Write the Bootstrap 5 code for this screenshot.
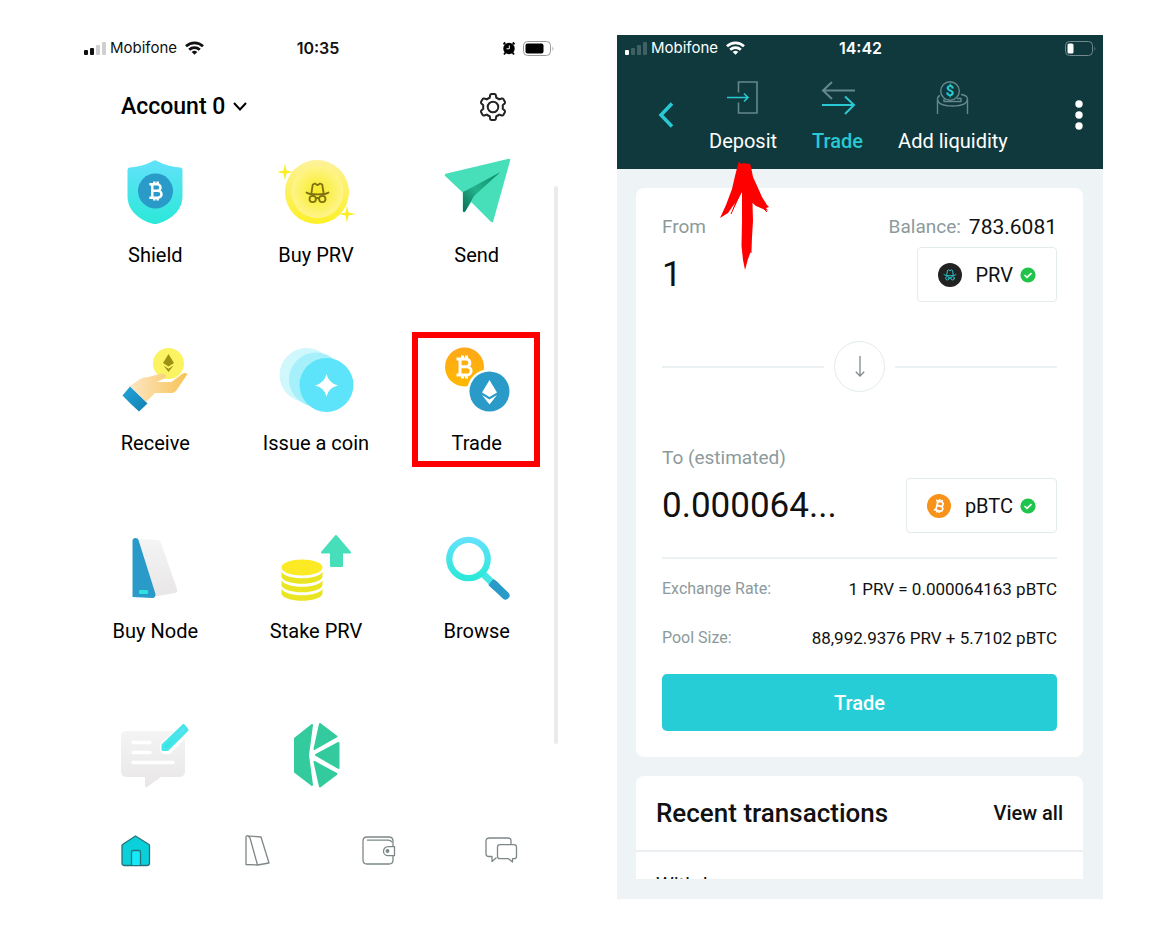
<!DOCTYPE html>
<html lang="en">
<head>
<meta charset="utf-8">
<meta name="viewport" content="width=device-width, initial-scale=1">
<title>Wallet and trade</title>
<link href="https://cdn.jsdelivr.net/npm/bootstrap@5.3.0/dist/css/bootstrap.min.css" rel="stylesheet">
<style>
  body { font-family: Roboto, "Liberation Sans", sans-serif; font-size: 20px; line-height: 26px; color: #111; background: #fff; }
  svg { display: block; overflow: visible; flex: none; }
  a { color: inherit; text-decoration: none; }
  .screens { gap: 57px; padding: 35px 51px 40px 74px; }
  .phone { flex: 1 1 0; min-width: 0; }

  .status { display: grid; grid-template-columns: 1fr auto 1fr; align-items: center; height: 26px; padding: 0 8px 0 10px; font: 15px/26px Inter, sans-serif; color: #111; }
  .status strong { font-size: 16px; font-weight: 600; }
  .home-head { height: 30px; margin: 31px 54px 28px 47px; }
  .account { font-size: 23px; font-weight: 500; line-height: 30px; color: #000; }
  .tiles { display: grid; grid-template-columns: repeat(3, 1fr); grid-template-rows: repeat(3, 188px) 74px; padding: 0 3px 0 1px; }
  .tile { display: flex; flex-direction: column; align-items: center; gap: 16px; padding-top: 10px; line-height: 30px; color: #000; }
  .picked { position: relative; }
  .picked::after { content: ""; position: absolute; top: -6px; left: 50%; width: 128px; height: 135px; margin-left: -65px; border: 6px solid #f00; }
  .thumb { position: absolute; right: 2px; top: 36px; bottom: 44px; width: 4px; background: #ebebeb; border-radius: 2px; }
  .tabs { display: grid; grid-template-columns: repeat(4, 1fr); margin: 46px -2px 0 0; justify-items: center; }

  .trade-screen { background: #eef4f5; }
  .top { background: #0f393d; color: #fff; }
  .top .status { color: #fff; padding: 0 7px 0 8px; }
  .top-nav { padding: 19px 20px 15px 42px; gap: 36px; }
  .modes { display: flex; gap: 35px; }
  .mode { display: flex; flex-direction: column; align-items: center; gap: 14px; position: relative; }
  .mode.on { color: #29c9d3; font-weight: 500; }
  .pointer { position: absolute; top: 81px; left: 50%; margin-left: -23px; z-index: 2; }
  .panels { padding: 19px 20px 20px 19px; display: grid; gap: 19px; }
  .panel { background: #fff; border-radius: 8px; overflow: hidden; }
  .pair { padding: 26px; }
  .muted { color: #8c9a9c; }
  .caption { font-size: 19px; }
  .balance { display: flex; gap: 8px; font-size: 21px; }
  .amount { border: 0; padding: 0; background: none; outline: 0; color: #111; font-size: 35px; line-height: 55px; height: 55px; flex: 1; min-width: 0; text-overflow: ellipsis; }
  .line { display: flex; align-items: center; margin-top: 7px; }
  .token { height: 55px; padding: 0 20px; background: #fff; border: 1px solid #e3ebed; border-radius: 4px; display: flex; align-items: center; gap: 7px; color: #111; }
  .token span { margin-left: 7px; }
  .swap { display: flex; align-items: center; gap: 10px; margin: 39px 0 53px; }
  .swap i { flex: 1; height: 2px; background: #ebf1f2; }
  .swap button { width: 51px; height: 51px; border: 1px solid #e3ebec; border-radius: 50%; background: #fff; padding: 0; display: grid; place-items: center; }
  .facts { display: grid; gap: 23px; margin: 24px 0 23px; padding-top: 17px; border-top: 2px solid #ebf1f2; font-size: 16px; }
  .facts div { display: flex; justify-content: space-between; }
  .facts dt { font-weight: 400; }
  .facts dd { margin: 0; font-size: 17px; }
  .go { height: 57px; border: 0; border-radius: 5px; background: #26cdd6; color: #fff; font-weight: 500; }
  .go:hover { background: #20bcc5; color: #fff; }
  .recent-head { padding: 24px 20px; border-bottom: 2px solid #ebeff1; }
  .recent-head h2 { font-size: 26px; line-height: 26px; font-weight: 500; margin: 0; }
  .recent { margin: 0; padding: 20px 20px 0; max-height: 27px; overflow: hidden; list-style: none; }
  .recent-panel { border-radius: 8px 8px 0 0; }
</style>
</head>
<body>
<svg width="0" height="0" class="position-absolute" aria-hidden="true">
  <defs>
    <linearGradient id="aqua" x1="0" y1="0" x2="0" y2="1"><stop stop-color="#62e2fb"/><stop offset="1" stop-color="#2be8d8"/></linearGradient>
    <linearGradient id="gold" x1="0" y1="0" x2="0" y2="1"><stop stop-color="#fdf29a"/><stop offset="1" stop-color="#fdf026"/></linearGradient>
    <radialGradient id="glow"><stop stop-color="#f8ea24"/><stop offset=".55" stop-color="#fbf15a"/><stop offset="1" stop-color="#fff48a"/></radialGradient>
    <linearGradient id="fold" x1="1" y1="0" x2="0" y2="1"><stop stop-color="#0b8a68"/><stop offset=".55" stop-color="#22b38c"/><stop offset="1" stop-color="#0b6b54"/></linearGradient>
    <linearGradient id="skin" x1="0" y1="0" x2="1" y2="0"><stop stop-color="#fde6c4"/><stop offset="1" stop-color="#f8c355"/></linearGradient>
    <linearGradient id="cuff" x1="0" y1="0" x2="1" y2="1"><stop stop-color="#22a5dc"/><stop offset="1" stop-color="#147fae"/></linearGradient>
    <linearGradient id="pale" x1="0" y1="0" x2="0" y2="1"><stop stop-color="#f5f4f4"/><stop offset="1" stop-color="#e8e6e7"/></linearGradient>
    <linearGradient id="orange" x1="0" y1="0" x2="0" y2="1"><stop stop-color="#ffa81a"/><stop offset="1" stop-color="#ffb800"/></linearGradient>
    <symbol id="coin-b" viewBox="0 0 20 24" overflow="visible"><path d="M2 4H11.500a3.900 3.900 0 0 1 0 7.800H6M2 20H12.500a4.100 4.100 0 0 0 0-8.200H6M5.500 4V20M8 .5V4M12 .5V4M8 20v3.500M12 20v3.500" fill="none" stroke="currentColor" stroke-width="3"/></symbol>
    <symbol id="hat" viewBox="0 0 24 22" overflow="visible"><g fill="none" stroke="currentColor" stroke-width="1.800" stroke-linejoin="round" stroke-linecap="round"><path d="M6 10.500 7.300 2.500 9.500 1.500 12 3.200 14.500 1.500 16.700 2.500 18 10.500M1 10.500c3 2.600 19 2.600 22 0M10.500 16.500q1.500-1 3 0"/><circle cx="7.200" cy="17" r="3.200"/><circle cx="16.800" cy="17" r="3.200"/></g></symbol>
    <symbol id="wifi" viewBox="0 0 19 14" overflow="visible"><g fill="none" stroke="currentColor" stroke-width="2.700"><path d="M1 5.300a12.200 12.200 0 0 1 17 0"/><path d="M4.200 8.700a7.700 7.700 0 0 1 10.600 0"/></g><path d="M6.700 11a4.200 4.200 0 0 1 5.600 0L9.500 13.800z" fill="currentColor"/></symbol>
    <symbol id="ok" viewBox="0 0 16 16"><circle cx="8" cy="8" r="7.600" fill="#21c44b"/><path d="m4.500 8 2.500 2.400 4.500-4.300" fill="none" stroke="#fff" stroke-width="1.600"/></symbol>
  </defs>
</svg>

<div class="screens d-flex">
  <main class="phone">
    <div class="status">
      <div class="d-flex align-items-center">
        <svg width="22" height="13" viewBox="0 0 22 13"><rect y="8" width="4" height="5" rx="1" fill="#111"/><rect x="6" y="6" width="4" height="7" rx="1" fill="#111"/><rect x="12" y="3" width="4" height="10" rx="1" fill="#cfcfcf"/><rect x="18" width="4" height="13" rx="1" fill="#cfcfcf"/></svg>
        <span class="ms-1 me-2">Mobifone</span>
        <svg width="19" height="14"><use href="#wifi"/></svg>
      </div>
      <strong>10:35</strong>
      <div class="d-flex align-items-center justify-content-end gap-2">
        <svg width="12" height="13" viewBox="0 0 12 13"><circle cx="6" cy="6.500" r="5.700"/><path d="m.5 2.300 1.800-1.800M11.500 2.300 9.700.5M2.500 10.500 1 12.500M9.500 10.500l1.500 2" stroke="#000" stroke-width="1.800"/><path d="M6.300 3.500v3.300H3.500" fill="none" stroke="#fff"/></svg>
        <svg width="29" height="15" viewBox="0 0 29 15"><rect x=".5" y=".5" width="27" height="14" rx="4" fill="none" stroke="#999"/><rect x="2.500" y="2.500" width="18" height="10" rx="2"/><path d="M29.500 5v5q1.500-2.500 0-5" fill="#999"/></svg>
      </div>
    </div>

    <header class="home-head d-flex justify-content-between align-items-center">
      <button class="account btn border-0 p-0 d-flex align-items-center gap-2">Account 0
        <svg width="14" height="10" viewBox="0 0 14 10"><path d="m1 1 6 6.500L13 1" fill="none" stroke="#000" stroke-width="2"/></svg>
      </button>
      <button class="btn border-0 p-0" aria-label="Settings">
        <svg width="26" height="28" viewBox="0 0 26 28" fill="none" stroke="#222" stroke-width="2" stroke-linejoin="round"><path d="M11.500 1H14.500Q15.600 1 15.800 2L16.300 4.800Q18 5.400 19.300 6.400L21.700 5.500Q22.800 5.200 23.300 6L24.900 8.800Q25.300 9.800 24.600 10.500L22.700 12.200Q23 14 22.700 15.800L24.600 17.500Q25.300 18.200 24.900 19.200L23.300 22Q22.800 22.800 21.700 22.500L19.300 21.600Q18 22.600 16.300 23.200L15.800 26Q15.600 27 14.500 27H11.500Q10.400 27 10.200 26L9.700 23.200Q8 22.600 6.700 21.600L4.300 22.500Q3.200 22.800 2.700 22L1.100 19.200Q.7 18.200 1.400 17.500L3.300 15.800Q3 14 3.300 12.200L1.400 10.500Q.7 9.800 1.100 8.800L2.700 6Q3.200 5.200 4.300 5.500L6.700 6.400Q8 5.400 9.700 4.800L10.200 2Q10.400 1 11.500 1z"/><circle cx="13" cy="14" r="5.300"/></svg>
      </button>
    </header>

    <div class="position-relative">
      <nav class="tiles" aria-label="Actions">
        <a class="tile" href="#shield">
          <svg width="80" height="64" viewBox="0 0 80 64"><path d="M38.500.8q1.500-1 3 0C49 5 57 7 65 7.500q2.500.2 2.500 3V36C67.500 54 51 61 43 63.600q-3 1-6 0C29 61 12.500 54 12.500 36V10.500q0-2.800 2.500-3C23 7 31 5 38.500.8z" fill="url(#aqua)"/><circle cx="40.500" cy="31" r="17.500" fill="#2a9bc9"/><use href="#coin-b" x="32.500" y="21" width="17" height="20" color="#fff"/></svg>
          Shield
        </a>
        <a class="tile" href="#buy-prv">
          <svg width="80" height="64" viewBox="0 0 80 64"><circle cx="41" cy="32" r="32" fill="url(#gold)"/><circle cx="41.500" cy="32" r="26" fill="url(#glow)"/><use href="#hat" x="29.500" y="22" width="24" height="22" color="#7d7110"/><g fill="#fdee22"><path d="M9 3.500 10.500 10.500 17 12 10.500 13.500 9 20.500 7.500 13.500 1 12 7.500 10.500z"/><path d="M71 45.500 72.500 52.500 79.500 54 72.500 55.500 71 63 69.500 55.500 63 54 69.500 52.500z"/></g></svg>
          Buy PRV
        </a>
        <a class="tile" href="#send">
          <svg width="80" height="64" viewBox="0 0 80 64"><path d="M9 15 72 0 55 61 34 40 27 51V32z" fill="#47dfb9" stroke="#47dfb9" stroke-width="2.500" stroke-linejoin="round"/><path d="M26 32q2-1 4-2L63.500 12 37 36 28.500 51q-2 2-2.500 0z" fill="url(#fold)"/></svg>
          Send
        </a>
        <a class="tile" href="#receive">
          <svg width="80" height="64" viewBox="0 0 80 64"><circle cx="53.500" cy="15.500" r="15.500" fill="#fcf363"/><path d="M53.500 6 59 15 53.500 18.500 48 15zM48.500 17.500l5 3.200 5-3.200-5 6.500z" fill="#9b9214"/><path d="m15 38 10-7q4-2 8-2l12-3q5-1 6 2 0 2-4 3.500L42 34H56.500L67 26q3-2 5.500 0L61 43q-2 2-4 2H40L31 54z" fill="url(#skin)"/><path d="m15 38.500 17.500 17-8.500 8q-8-7-16.500-16z" fill="url(#cuff)"/></svg>
          Receive
        </a>
        <a class="tile" href="#issue">
          <svg width="80" height="64" viewBox="0 0 80 64"><circle cx="30.500" cy="27" r="27" fill="#cff7fc"/><circle cx="40" cy="31.500" r="27" fill="#a5f0fb"/><circle cx="50.500" cy="37" r="27" fill="#5ee4fa"/><path d="M50.500 26q2 9 11.500 11.500-9.500 2-11.500 11-2-9-11.500-11 9.500-2.500 11.500-11.500z" fill="#fff"/></svg>
          Issue a coin
        </a>
        <a class="tile picked" href="#trade">
          <svg width="80" height="64" viewBox="0 0 80 64"><circle cx="27.500" cy="19" r="19.500" fill="url(#orange)"/><use href="#coin-b" x="17.500" y="7" width="20" height="24" color="#fff"/><circle cx="52.500" cy="43.500" r="22.500" fill="#fff"/><circle cx="52.500" cy="43.500" r="20" fill="#2a9bc9"/><path d="m52.500 32 7.500 12.500-7.500 4.500-7.500-4.500zM45 47l7.500 4.500L60 47l-7.500 9.500z" fill="#fff"/></svg>
          Trade
        </a>
        <a class="tile" href="#node">
          <svg width="80" height="64" viewBox="0 0 80 64"><path d="m22 3 20 1q3 0 4 3l16 46q1 3-2 4l-20 3.500z" fill="url(#pale)"/><path d="M17.500 5q0-3 3-3 2.500 0 3 2L40.500 58q0 4-3 4l-20-1z" fill="#2a9bc9"/><rect x="24" y="54" width="9" height="4" rx="1" fill="#2fe2e0"/></svg>
          Buy Node
        </a>
        <a class="tile" href="#stake">
          <svg width="80" height="64" viewBox="0 0 80 64"><ellipse cx="26" cy="31.500" rx="20.500" ry="8" fill="#fbea24"/><g fill="#eae522"><path id="band" d="M5.500 35.500c3 9 38 9 41 0v5.500c-3 9-38 9-41 0z"/><use href="#band" y="8.500"/><use href="#band" y="17"/></g><path d="M60 0 74 16.500H66V30H55V16.500H46z" fill="#47dfb9" stroke="#47dfb9" stroke-width="2" stroke-linejoin="round"/></svg>
          Stake PRV
        </a>
        <a class="tile" href="#browse">
          <svg width="80" height="64" viewBox="0 0 80 64"><path d="m45 37 11 10.500" stroke="#45e6e4" stroke-width="7"/><circle cx="31.500" cy="23" r="19.200" fill="none" stroke="url(#aqua)" stroke-width="6.300"/><path d="m57 48.500 11.500 11" stroke="#2a9bc9" stroke-width="8" stroke-linecap="round"/><path d="m54 46 6 5.500" stroke="#2a9bc9" stroke-width="8"/></svg>
          Browse
        </a>
        <a class="tile" href="#feedback" aria-label="Feedback">
          <svg width="80" height="64" viewBox="0 0 80 64"><path d="M12 7H64q6 0 6 6V47q0 6-6 6H46L32 63q-2 1-2-1V53H12q-6 0-6-6V13q0-6 6-6z" fill="url(#pale)"/><path d="M18 18.500H35M18 28.500H35M18 38.500H58" stroke="#fff" stroke-width="3.300" stroke-linecap="round"/><path d="M70 3 50 22v3h3L72 5z" fill="#fff" stroke="#fff" stroke-width="10" stroke-linejoin="round"/><path d="M68.500 1.500 48 21v4.500h4.500L72 6z" fill="url(#aqua)" stroke="#47e5e9" stroke-width="3" stroke-linejoin="round"/></svg>
        </a>
        <a class="tile" href="#kyber" aria-label="Kyber">
          <svg width="80" height="64" viewBox="0 0 80 64" fill="#33cb9d" stroke="#33cb9d" stroke-width="2" stroke-linejoin="round"><path d="M36 1 19 14.500V48L36 61 32 31zM44 0 60.500 12.500 38.500 25zM62.500 19V44L40 31zM38.500 38 60.500 50 44 62.500z"/></svg>
        </a>
      </nav>
      <div class="thumb"></div>
    </div>

    <nav class="tabs" aria-label="Sections">
      <a href="#home" aria-label="Home"><svg width="32" height="32" viewBox="0 0 32 32" stroke="#28727a" stroke-width="1.300" stroke-linejoin="round"><path d="M16.500 2 30 10.500q.5.500.5 1.500V29q0 2.500-2.500 2.500H5.500Q3 31.500 3 29V12q0-1 .5-1.500z" fill="#0ad0da"/><path d="M12.500 31V18q0-1.500 1.500-1.500h6q1.500 0 1.500 1.500V31" fill="#15eafa"/></svg></a>
      <a href="#nodes" aria-label="Nodes"><svg width="32" height="32" viewBox="0 0 32 32" fill="none" stroke="#7e8788" stroke-width="1.300" stroke-linejoin="round"><path d="M7 1.800 20 3 28 29 16.500 31 5 30.500V3q0-1.500 2-1.200L9 4l7.500 27"/></svg></a>
      <a href="#wallet" aria-label="Wallet"><svg width="32" height="32" viewBox="0 0 32 32" fill="none" stroke="#7e8788" stroke-width="1.300"><path d="M30 12.500V7q0-4-4-4H4Q0 3 0 7V26q0 4 4 4H26q4 0 4-4V21.500M4 6.200H25q3 0 4 2"/><path d="M31.500 12.700H25a4.500 4.500 0 0 0 0 9h6.500z"/><circle cx="24.500" cy="17" r="1.300" fill="#7e8788"/></svg></a>
      <a href="#chat" aria-label="Chat"><svg width="32" height="32" viewBox="0 0 32 32" fill="none" stroke="#7e8788" stroke-width="1.300" stroke-linejoin="round"><path d="M26 10.500V7q0-3-3-3H4.500Q1 4 1 7V20q0 2.500 3 2.500H7V27.500L11.500 23.500M15 10.700H29q2.500 0 2.500 2.500v9q0 2.500-2.500 2.500H27.500V28L23.500 24.700H15q-2.500 0-2.500-2.500v-9q0-2.500 2.500-2.500z"/></svg></a>
    </nav>
  </main>

  <section class="phone trade-screen">
    <header class="top">
      <div class="status">
        <div class="d-flex align-items-center">
          <svg width="22" height="13" viewBox="0 0 22 13"><rect y="8" width="4" height="5" rx="1" fill="#fff"/><g fill="#3f6164"><rect x="6" y="6" width="4" height="7" rx="1"/><rect x="12" y="3" width="4" height="10" rx="1"/><rect x="18" width="4" height="13" rx="1"/></g></svg>
          <span class="ms-1 me-2">Mobifone</span>
          <svg width="19" height="14"><use href="#wifi"/></svg>
        </div>
        <strong>14:42</strong>
        <div class="d-flex justify-content-end">
          <svg width="31" height="15" viewBox="0 0 31 15"><rect x=".5" y=".5" width="27" height="14" rx="4" fill="none" stroke="#71898b"/><rect x="2.500" y="2.500" width="6" height="10" rx="1.500" fill="#fff"/><path d="M29.500 5v5q1.500-2.500 0-5" fill="#71898b"/></svg>
        </div>
      </div>
      <div class="top-nav d-flex align-items-center">
        <button class="btn border-0 p-0 pb-1" aria-label="Back"><svg width="14" height="26" viewBox="0 0 14 26"><path d="M13 1.500 2 13 13 24.500" fill="none" stroke="#29c9d3" stroke-width="3.500"/></svg></button>
        <nav class="modes" aria-label="Modes">
          <a class="mode" href="#deposit">
            <svg width="34" height="34" viewBox="0 0 34 34" fill="none" stroke-width="1.600"><path d="M12.500 12.500V2H31V33H12.500V22.500" stroke="#65888c"/><path d="M1 17.500H22M18 13.500l4 4-4 4" stroke="#29c9d3"/></svg>
            Deposit
            <svg class="pointer" width="50" height="110" viewBox="0 0 50 110" fill="#f00"><path d="M17.500 5 19 .5 21 3 24 2 28 3 30 2.500 31 6 33 16 38 27 42 36 47 44 49 46 46 47 48 50 43 48 36 45 32.500 42 33 60 32 76 31 90 28 98 25 109 23 99 21.500 85 22 60 22 31 17 40 12 50 15 42 8 52 0 57 6 44 12 28 15 15z"/><path d="M21 31 11 53M18 33 7 52M31 38V92M36 40 47 51" stroke="#f00" fill="none"/></svg>
          </a>
          <a class="mode on" href="#swap">
            <svg width="34" height="34" viewBox="0 0 34 34" fill="none" stroke-width="2"><path d="M34 10.500H2M11 2 2 10.500 11 19" stroke="#65888c"/><path d="M1 25H33M24 16.500l9 8.500-9 9" stroke="#29c9d3"/></svg>
            Trade
          </a>
          <a class="mode" href="#liquidity">
            <svg width="34" height="34" viewBox="0 0 34 34" fill="none" stroke="#65888c" stroke-width="1.400"><path d="M1.500 34V18.500Q1.500 26 16.500 26T31.500 18.500V34M1.500 19q.5-3 2.500-3.500M31.500 19q-.5-4-6.500-4.500M8 19v2.500h17v-3h-4"/><circle cx="14" cy="11" r="9.300" fill="#0f393d"/><text x="14" y="16" text-anchor="middle" font-size="15" font-weight="700" fill="#29c9d3" stroke="none">$</text></svg>
            Add liquidity
          </a>
        </nav>
        <button class="btn border-0 p-0 pb-1 ms-auto" aria-label="More"><svg width="8" height="30" viewBox="0 0 8 30" fill="#fff"><circle cx="4" cy="4" r="3.700"/><circle cx="4" cy="15" r="3.700"/><circle cx="4" cy="26" r="3.700"/></svg></button>
      </div>
    </header>

    <div class="panels">
      <form class="panel pair" onsubmit="return false">
        <div class="d-flex justify-content-between">
          <label class="muted caption" for="from">From</label>
          <div class="balance"><span class="muted caption">Balance:</span><span>783.6081</span></div>
        </div>
        <div class="line">
          <input class="amount" id="from" value="1">
          <button class="token" type="button"><svg width="24" height="24" viewBox="0 0 24 24"><circle cx="12" cy="12" r="12" fill="#222"/><use href="#hat" x="5.500" y="6" width="13" height="12" color="#29c9d3"/></svg><span>PRV</span><svg width="16" height="16"><use href="#ok"/></svg></button>
        </div>
        <div class="swap"><i></i><button type="button" aria-label="Swap"><svg width="10" height="22" viewBox="0 0 10 22"><path d="M5 0V20M.8 15.800 5 20l4.200-4.200" fill="none" stroke="#7e8a8b" stroke-width="1.300"/></svg></button><i></i></div>
        <label class="muted caption d-block" for="to">To (estimated)</label>
        <div class="line">
          <input class="amount" id="to" value="0.000064...">
          <button class="token" type="button"><svg width="24" height="24" viewBox="0 0 24 24"><circle cx="12" cy="12" r="12" fill="#f7931a"/><g transform="rotate(14 12 12)"><use href="#coin-b" x="6.500" y="5" width="12" height="14" color="#fff"/></g></svg><span>pBTC</span><svg width="16" height="16"><use href="#ok"/></svg></button>
        </div>
        <dl class="facts">
          <div><dt class="muted">Exchange Rate:</dt><dd>1 PRV = 0.000064163 pBTC</dd></div>
          <div><dt class="muted">Pool Size:</dt><dd>88,992.9376 PRV + 5.7102 pBTC</dd></div>
        </dl>
        <button class="go btn w-100 fs-5" type="submit">Trade</button>
      </form>
      <section class="panel recent-panel">
        <div class="recent-head d-flex justify-content-between align-items-center"><h2>Recent transactions</h2><a class="fw-medium" href="#all">View all</a></div>
        <ul class="recent"><li>Withdraw</li></ul>
      </section>
    </div>
  </section>
</div>
<script src="https://cdn.jsdelivr.net/npm/bootstrap@5.3.0/dist/js/bootstrap.bundle.min.js"></script>
</body>
</html>
